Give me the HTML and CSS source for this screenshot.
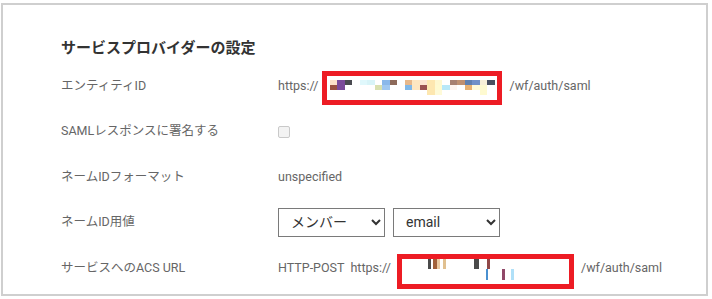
FILE: index.html
```html
<!DOCTYPE html>
<html lang="ja">
<head>
<meta charset="utf-8">
<title>サービスプロバイダーの設定</title>
<link rel="stylesheet" href="styles.css">
</head>
<body>
<div class="card">
  <h2 class="title">サービスプロバイダーの設定</h2>
  <div class="row">
    <div class="label">エンティティID</div>
    <div class="value">
      <span>https://</span>
      <span class="redact redact-entity">
        <span class="mosaic">
          <i class="c1"></i><i class="c2"></i><i class="c3"></i><i></i><i class="c4"></i><i class="c5"></i><i></i><i class="c6"></i><i class="c7"></i><i></i><i class="c8"></i><i class="c9"></i><i class="c10"></i><i class="c11"></i><i class="c12"></i><i></i><i class="c13"></i><i class="c14"></i><i class="c15"></i><i class="c16"></i><i class="c17"></i><i class="c18"></i>
          <i class="d1"></i><i class="c2"></i><i></i><i></i><i></i><i></i><i class="d2"></i><i class="d3"></i><i></i><i></i><i class="d4"></i><i class="c9"></i><i class="d5"></i><i class="c11"></i><i class="d6"></i><i class="d7"></i><i class="d8"></i><i></i><i class="d9"></i><i class="d10"></i><i class="d6"></i><i></i>
          <i></i><i></i><i></i><i></i><i></i><i></i><i></i><i></i><i></i><i></i><i></i><i></i><i></i><i class="c11"></i><i class="d10"></i><i></i><i></i><i></i><i></i><i></i><i class="d6"></i><i></i>
        </span>
      </span>
      <span class="tail">/wf/auth/saml</span>
    </div>
  </div>
  <div class="row">
    <div class="label">SAMLレスポンスに署名する</div>
    <div class="value"><input type="checkbox" class="check" disabled></div>
  </div>
  <div class="row">
    <div class="label">ネームIDフォーマット</div>
    <div class="value">unspecified</div>
  </div>
  <div class="row">
    <div class="label">ネームID用値</div>
    <div class="value selects">
      <select class="sel"><option>メンバー</option></select>
      <select class="sel"><option>email</option></select>
    </div>
  </div>
  <div class="row">
    <div class="label">サービスへのACS URL</div>
    <div class="value">
      <span class="method">HTTP-POST</span>
      <span>https://</span>
      <span class="redact redact-acs">
        <i class="b b1"></i><i class="b b2"></i><i class="b b3"></i><i class="b b4"></i><i class="b b5"></i><i class="b b6"></i><i class="b b7"></i><i class="b b8"></i><i class="b b9"></i>
      </span>
      <span class="tail tail-acs">/wf/auth/saml</span>
    </div>
  </div>
</div>
</body>
</html>
```
FILE: styles.css
```css
* { box-sizing: border-box; }
html, body { margin: 0; padding: 0; background: #fff; }
body {
  padding: 3px 0 0 1px;
  font-family: Roboto, "Noto Sans CJK JP", sans-serif;
  font-size: 12.5px;
  color: #666;
}
.card {
  width: 707px;
  height: 293px;
  border: 2px solid #cfcfcf;
  padding: 33px 0 0 58px;
  overflow: hidden;
}
.title {
  margin: 0 0 5px;
  font-size: 15px;
  line-height: 20px;
  font-weight: 700;
  color: #333;
}
.row {
  display: flex;
  align-items: center;
  height: 45.5px;
}
.label {
  width: 217px;
  flex: none;
  line-height: 18px;
}
.value {
  display: flex;
  align-items: center;
  line-height: 18px;
}
.redact {
  display: block;
  border: 5px solid #ed1c24;
  background: #fff;
  position: relative;
}
.redact-entity {
  width: 180px;
  height: 34px;
  margin: 5px 0 0 3px;
  padding: 4px 0 0 3px;
}
.mosaic {
  display: grid;
  grid-template-columns: repeat(22, 7.5px);
  grid-auto-rows: 5px;
}
.mosaic i { display: block; }
.c1 { background: #fde0c8; }
.c2 { background: #7b4a9a; }
.c3 { background: #4a4a50; }
.c4 { background: #e0f8fc; }
.c5 { background: #d8f4f8; }
.c6 { background: #8ab8ea; }
.c7 { background: #8d6a5a; }
.c8 { background: #e8b88a; }
.c9 { background: #fde7c2; }
.c10 { background: #fde3d0; }
.c11 { background: #fde7b0; }
.c12 { background: #fef8d0; }
.c13 { background: #a88070; }
.c14 { background: #c09070; }
.c15 { background: #6080b0; }
.c16 { background: #7090c8; }
.c17 { background: #f8f0d8; }
.c18 { background: #4a5060; }
.d1 { background: #9a5040; }
.d2 { background: #d8e0b0; }
.d3 { background: #a0c8f0; }
.d4 { background: #80b8e8; }
.d5 { background: #9a5050; }
.d6 { background: #fefad0; }
.d7 { background: #b8e8f8; }
.d8 { background: #fff4ee; }
.d9 { background: #e8b070; }
.d10 { background: #fefad8; }
.tail { margin-left: 8px; }
.check {
  appearance: none;
  -webkit-appearance: none;
  margin: 1px 0 0 0;
  width: 12px;
  height: 12px;
  border: 1px solid #c9c9c9;
  border-radius: 2px;
  background: #f3f3f3;
}
.selects { gap: 8px; }
.sel {
  width: 107px;
  height: 29px;
  margin: 0;
  border: 1px solid #7a7a7a;
  border-radius: 0;
  background-color: #fff;
  padding: 0 0 0 8px;
  font-family: Roboto, "Noto Sans CJK JP", sans-serif;
  font-size: 14px;
  color: #333;
}
.method { margin-right: 6px; }
.redact-acs {
  width: 177px;
  height: 35px;
  margin: 7px 0 0 6px;
}
.b { position: absolute; display: block; width: 3px; }
.b1 { left: 26px; top: 0; height: 10px; background: #4a4a4a; }
.b2 { left: 31px; top: 0; height: 10px; width: 4px; background: #a0603a; }
.b3 { left: 35px; top: 0; height: 10px; background: #e8c8a0; }
.b4 { left: 41px; top: 0; height: 10px; background: #e0c090; }
.b5 { left: 72px; top: 0; height: 10px; width: 5px; background: #4a4a4a; }
.b6 { left: 85px; top: 0; height: 10px; background: #904848; }
.b7 { left: 84px; top: 10px; height: 11px; width: 2px; background: #4a90d0; }
.b8 { left: 100px; top: 10px; height: 11px; background: #904868; }
.b9 { left: 109px; top: 10px; height: 11px; background: #b0e0f8; }
.tail-acs { margin-left: 7px; }
```
